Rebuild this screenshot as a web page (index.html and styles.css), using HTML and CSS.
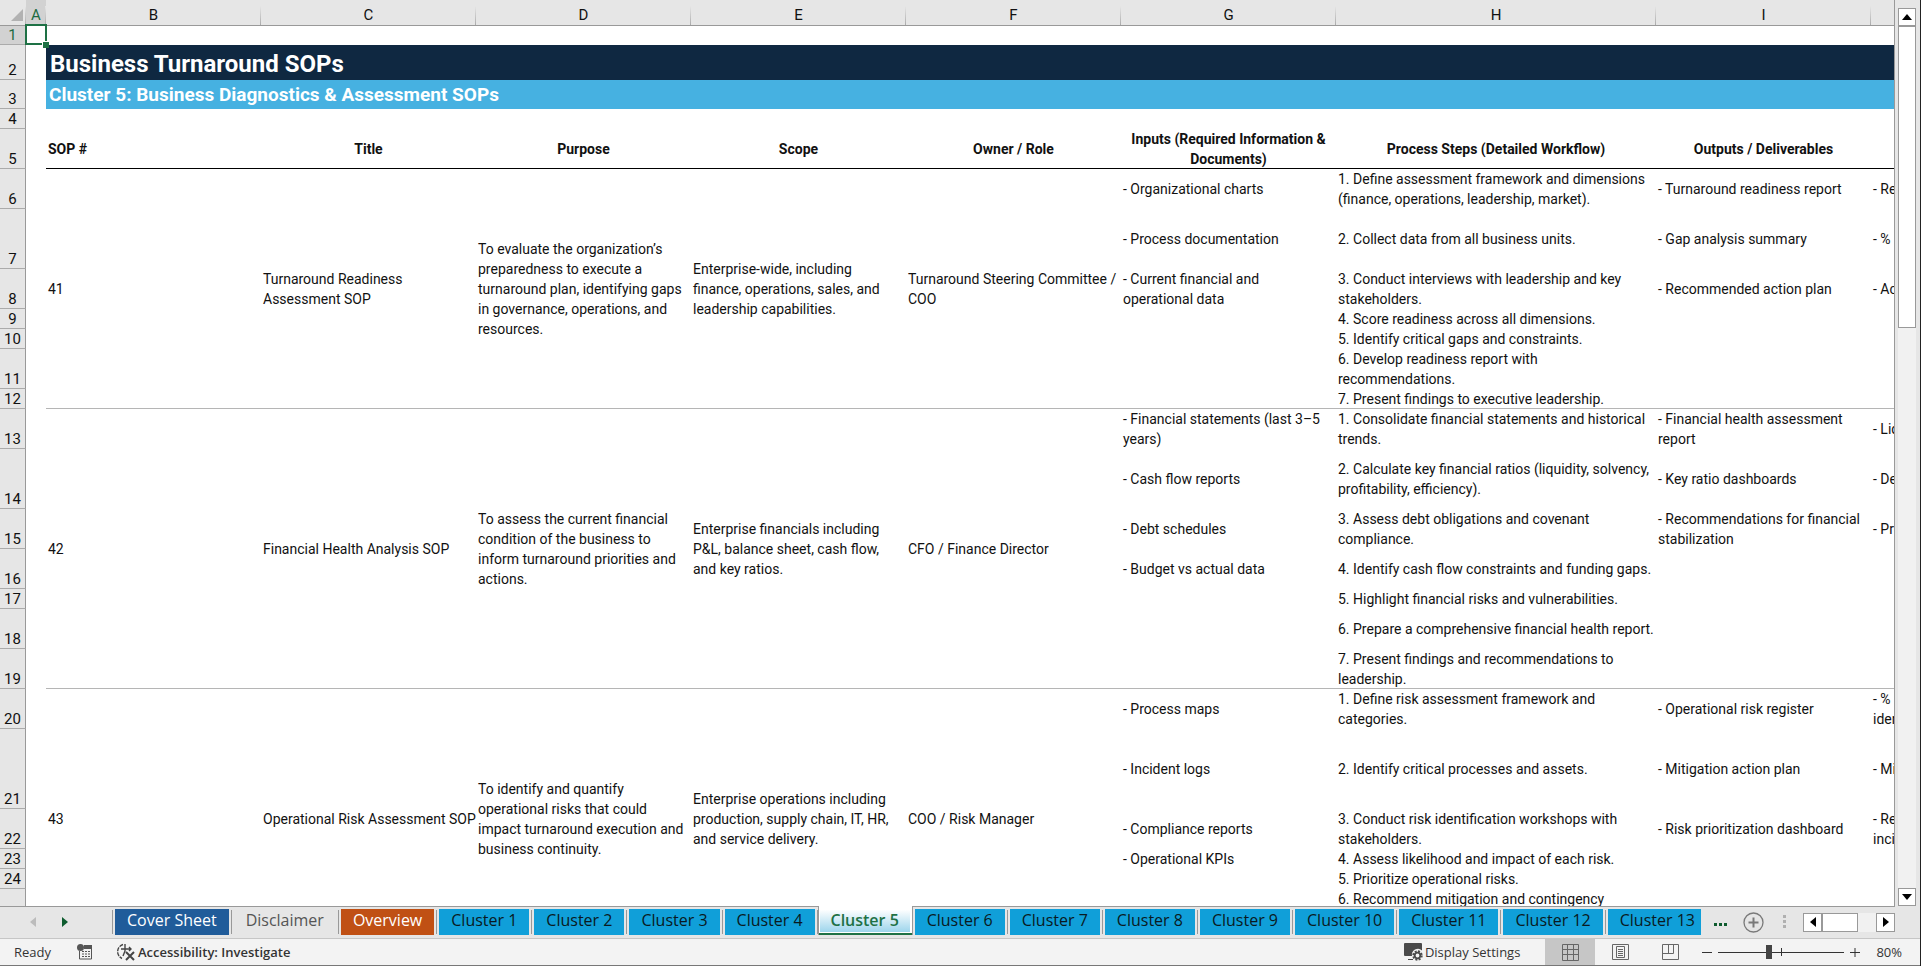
FILE: index.html
```html
<!DOCTYPE html>
<html lang="en">
<head>
    <meta charset="UTF-8">
    <title>Business Turnaround SOPs</title>
    <link rel="stylesheet" href="styles.css">
</head>
<body>
<div class="app">
    <div class="work">
        <div class="grid">
            <table class="sheet">
                <colgroup>
                    <col class="c-num"><col class="c-a"><col class="c-n"><col class="c-n"><col class="c-n"><col class="c-n"><col class="c-n"><col class="c-n"><col class="c-h"><col class="c-n"><col class="c-n">
                </colgroup>
                <thead>
                <tr class="letters">
                    <th class="corner"><svg width="12" height="12" viewBox="0 0 12 12"><path d="M12 0v12H0z" fill="#b2b2b2"/></svg></th>
                    <th class="on">A</th><th>B</th><th>C</th><th>D</th><th>E</th><th>F</th><th>G</th><th>H</th><th>I</th><th></th>
                </tr>
                </thead>
                <tbody>
                <tr class="h19"><th class="num on">1</th><td class="active"></td><td colspan="9"></td></tr>
                <tr class="h35"><th class="num">2</th><td></td><td class="title" colspan="9">Business Turnaround SOPs</td></tr>
                <tr class="h29"><th class="num">3</th><td></td><td class="subtitle" colspan="9">Cluster 5: Business Diagnostics &amp; Assessment SOPs</td></tr>
                <tr class="h20"><th class="num">4</th><td></td><td colspan="9"></td></tr>
                <tr class="h40 heads">
                    <th class="num">5</th><td></td>
                    <th class="left">SOP #</th><th>Title</th><th>Purpose</th><th>Scope</th><th>Owner / Role</th>
                    <th>Inputs (Required Information &amp; Documents)</th><th>Process Steps (Detailed Workflow)</th><th>Outputs / Deliverables</th><th></th>
                </tr>

                <!-- SOP 41 -->
                <tr class="h40">
                    <th class="num">6</th><td></td>
                    <td class="end" rowspan="7">41</td>
                    <td class="end" rowspan="7">Turnaround Readiness Assessment SOP</td>
                    <td class="end" rowspan="7">To evaluate the organization’s preparedness to execute a turnaround plan, identifying gaps in governance, operations, and resources.</td>
                    <td class="end" rowspan="7">Enterprise-wide, including<br>finance, operations, sales, and leadership capabilities.</td>
                    <td class="end" rowspan="7">Turnaround Steering Committee / COO</td>
                    <td>- Organizational charts</td><td>1. Define assessment framework and dimensions (finance, operations, leadership, market).</td><td>- Turnaround readiness report</td><td>- Readiness score</td>
                </tr>
                <tr class="h60"><th class="num">7</th><td></td><td>- Process documentation</td><td>2. Collect data from all business units.</td><td>- Gap analysis summary</td><td>- % of gaps closed</td></tr>
                <tr class="h40"><th class="num">8</th><td></td><td>- Current financial and<br>operational data</td><td>3. Conduct interviews with leadership and key stakeholders.</td><td>- Recommended action plan</td><td>- Action plan status</td></tr>
                <tr class="h20"><th class="num">9</th><td></td><td></td><td>4. Score readiness across all dimensions.</td><td></td><td></td></tr>
                <tr class="h20"><th class="num">10</th><td></td><td></td><td>5. Identify critical gaps and constraints.</td><td></td><td></td></tr>
                <tr class="h40"><th class="num">11</th><td></td><td></td><td>6. Develop readiness report with<br>recommendations.</td><td></td><td></td></tr>
                <tr class="h20 last"><th class="num">12</th><td></td><td></td><td>7. Present findings to executive leadership.</td><td></td><td></td></tr>

                <!-- SOP 42 -->
                <tr class="h40">
                    <th class="num">13</th><td></td>
                    <td class="end" rowspan="7">42</td>
                    <td class="end" rowspan="7">Financial Health Analysis SOP</td>
                    <td class="end" rowspan="7">To assess the current financial condition of the business to inform turnaround priorities and actions.</td>
                    <td class="end" rowspan="7">Enterprise financials including P&amp;L, balance sheet, cash flow, and key ratios.</td>
                    <td class="end" rowspan="7">CFO / Finance Director</td>
                    <td>- Financial statements (last 3–5 years)</td><td>1. Consolidate financial statements and historical trends.</td><td>- Financial health assessment report</td><td>- Liquidity ratio</td>
                </tr>
                <tr class="h60"><th class="num">14</th><td></td><td>- Cash flow reports</td><td>2. Calculate key financial ratios (liquidity, solvency, profitability, efficiency).</td><td>- Key ratio dashboards</td><td>- Debt ratio</td></tr>
                <tr class="h40"><th class="num">15</th><td></td><td>- Debt schedules</td><td>3. Assess debt obligations and covenant<br>compliance.</td><td>- Recommendations for financial stabilization</td><td>- Profit margin</td></tr>
                <tr class="h40"><th class="num">16</th><td></td><td>- Budget vs actual data</td><td>4. Identify cash flow constraints and funding gaps.</td><td></td><td></td></tr>
                <tr class="h20"><th class="num">17</th><td></td><td></td><td>5. Highlight financial risks and vulnerabilities.</td><td></td><td></td></tr>
                <tr class="h40"><th class="num">18</th><td></td><td></td><td>6. Prepare a comprehensive financial health report.</td><td></td><td></td></tr>
                <tr class="h40 last"><th class="num">19</th><td></td><td></td><td>7. Present findings and recommendations to leadership.</td><td></td><td></td></tr>

                <!-- SOP 43 -->
                <tr class="h40">
                    <th class="num">20</th><td></td>
                    <td rowspan="7">43</td>
                    <td class="wide" rowspan="7">Operational Risk Assessment SOP</td>
                    <td rowspan="7">To identify and quantify operational risks that could impact turnaround execution and business continuity.</td>
                    <td rowspan="7">Enterprise operations including production, supply chain, IT, HR, and service delivery.</td>
                    <td rowspan="7">COO / Risk Manager</td>
                    <td>- Process maps</td><td>1. Define risk assessment framework and<br>categories.</td><td>- Operational risk register</td><td>- % of risks<br>identified</td>
                </tr>
                <tr class="h80"><th class="num">21</th><td></td><td>- Incident logs</td><td>2. Identify critical processes and assets.</td><td>- Mitigation action plan</td><td>- Mitigation rate</td></tr>
                <tr class="h40"><th class="num">22</th><td></td><td>- Compliance reports</td><td>3. Conduct risk identification workshops with stakeholders.</td><td>- Risk prioritization dashboard</td><td>- Reduction in<br>incidents</td></tr>
                <tr class="h20"><th class="num">23</th><td></td><td>- Operational KPIs</td><td>4. Assess likelihood and impact of each risk.</td><td></td><td></td></tr>
                <tr class="h20"><th class="num">24</th><td></td><td></td><td>5. Prioritize operational risks.</td><td></td><td></td></tr>
                <tr class="h40"><th class="num">25</th><td></td><td></td><td>6. Recommend mitigation and contingency<br>plans.</td><td></td><td></td></tr>
                <tr class="h20 last"><th class="num">26</th><td></td><td></td><td></td><td></td><td></td></tr>
                </tbody>
            </table>
        </div>
        <div class="vscroll">
            <button class="arrow" aria-label="Scroll up"><svg width="10" height="6" viewBox="0 0 10 6"><path d="M5 0l5 6H0z"/></svg></button>
            <div class="track"><div class="thumb"></div></div>
            <button class="arrow" aria-label="Scroll down"><svg width="10" height="6" viewBox="0 0 10 6"><path d="M5 6l5-6H0z"/></svg></button>
        </div>
    </div>

    <div class="tabbar">
        <div class="tabnav">
            <button aria-label="Previous sheets"><svg width="6" height="10" viewBox="0 0 6 10"><path d="M6 0v10L0 5z" fill="#bcbcbc"/></svg></button>
            <button aria-label="Next sheets"><svg width="6" height="10" viewBox="0 0 6 10"><path d="M0 0v10l6-5z" fill="#0e5c2f"/></svg></button>
        </div>
        <nav class="tabs">
            <a class="tab" href="#"><span class="navy">Cover Sheet</span></a>
            <a class="tab" href="#"><span class="plain">Disclaimer</span></a>
            <a class="tab" href="#"><span class="orange">Overview</span></a>
            <a class="tab" href="#"><span>Cluster 1</span></a>
            <a class="tab" href="#"><span>Cluster 2</span></a>
            <a class="tab" href="#"><span>Cluster 3</span></a>
            <a class="tab" href="#"><span>Cluster 4</span></a>
            <a class="tab current" href="#"><span>Cluster 5</span></a>
            <a class="tab" href="#"><span>Cluster 6</span></a>
            <a class="tab" href="#"><span>Cluster 7</span></a>
            <a class="tab" href="#"><span>Cluster 8</span></a>
            <a class="tab" href="#"><span>Cluster 9</span></a>
            <a class="tab" href="#"><span>Cluster 10</span></a>
            <a class="tab" href="#"><span>Cluster 11</span></a>
            <a class="tab" href="#"><span>Cluster 12</span></a>
            <a class="tab" href="#"><span>Cluster 13</span></a>
        </nav>
        <div class="tabtools">
            <button class="more" aria-label="More sheets"><svg width="13" height="3" viewBox="0 0 13 3" fill="#0e5c2f"><path d="M0 0h3v3H0zM5 0h3v3H5zM10 0h3v3h-3z"/></svg></button>
            <button class="add" aria-label="New sheet"><svg width="21" height="21" viewBox="0 0 21 21" fill="none" stroke="#7a7a7a"><circle cx="10.500" cy="10.500" r="9.500" stroke-width="1.300"/><path d="M10.500 5.500v10M5.500 10.500h10" stroke-width="2"/></svg></button>
            <svg class="grip" width="4" height="14" viewBox="0 0 4 14" fill="#b0b0b0"><path d="M0 0h3v3H0zM0 5h3v3H0zM0 10h3v3H0z"/></svg>
            <div class="hscroll">
                <button class="arrow" aria-label="Scroll left"><svg width="6" height="10" viewBox="0 0 6 10"><path d="M6 0v10L0 5z"/></svg></button>
                <div class="track"><div class="thumb"></div></div>
                <button class="arrow" aria-label="Scroll right"><svg width="6" height="10" viewBox="0 0 6 10"><path d="M0 0v10l6-5z"/></svg></button>
            </div>
        </div>
    </div>

    <footer class="status">
        <span class="ready">Ready</span>
        <button class="macro" aria-label="Record macro"><svg width="15" height="16" viewBox="0 0 15 16"><path d="M14.500 2.500v12.500h-12V7" fill="none" stroke="#555"/><path d="M7 1h8v4H7z" fill="#555"/><circle cx="3.500" cy="3.500" r="3.500" fill="#555"/><path d="M5 7.500h8M5 10h8M5 12.500h8" stroke="#555" stroke-dasharray="2 1"/></svg></button>
        <button class="access"><svg width="19" height="18" viewBox="0 0 19 18" fill="none" stroke="#444"><path d="M7 1.500A7.500 7.500 0 0 0 6 15.500" stroke-width="1.400" stroke-dasharray="4 1"/><path d="M5 6h10M13 4l2 2-2 2M9 1v7l-2 5" stroke-width="1.400"/><path d="M10 9l8 8M18 9l-8 8" stroke-width="2"/></svg>Accessibility: Investigate</button>
        <button class="display"><svg width="19" height="18" viewBox="0 0 19 18"><path d="M1 0h16a1 1 0 0 1 1 1v6.500a6 6 0 0 0-10 5.500H1a1 1 0 0 1-1-1V1a1 1 0 0 1 1-1zM4 16h5v1H4z" fill="#4a4a4a"/><circle cx="13.500" cy="12.500" r="2.800" fill="none" stroke="#4a4a4a" stroke-width="1.800"/><circle cx="13.500" cy="12.500" r="4.300" fill="none" stroke="#4a4a4a" stroke-width="1.800" stroke-dasharray="2 1.377"/></svg>Display Settings</button>
        <div class="views">
            <button class="view on" aria-label="Normal"><svg width="17" height="17" viewBox="0 0 17 17" fill="none" stroke="#666"><path d="M.5.500h16v16H.5zM.5 5.500h16M.5 10.500h16M5.500.500v16M11.500.500v16"/></svg></button>
            <button class="view" aria-label="Page Layout"><svg width="17" height="16" viewBox="0 0 17 16" fill="none" stroke="#666"><path d="M.5.500h16v15H.5zM4.500 2.500h8v11h-8zM6 5.500h5M6 7.500h5M6 9.500h5M6 11.500h5"/></svg></button>
            <button class="view" aria-label="Page Break Preview"><svg width="17" height="16" viewBox="0 0 17 16" fill="none" stroke="#666"><path d="M.5.500h16v15H.5zM.5 9.500h11V.5M6.500.500v9"/></svg></button>
        </div>
        <div class="zoom">
            <button aria-label="Zoom out"><svg width="10" height="10" viewBox="0 0 10 10"><path d="M0 5.500h10" stroke="#333"/></svg></button>
            <input type="range" min="10" max="190" value="81" aria-label="Zoom">
            <button aria-label="Zoom in"><svg width="10" height="10" viewBox="0 0 10 10"><path d="M0 5.500h10M5 1v9" stroke="#333"/></svg></button>
            <span class="pct">80%</span>
        </div>
    </footer>
</div>
</body>
</html>
```
FILE: styles.css
```css
* {
    box-sizing: border-box;
}

body {
    margin: 0;
    font-family: Roboto, "Liberation Sans", sans-serif;
    font-size: 14px;
    line-height: 20px;
    color: #111;
    background: #e6e6e6;
}

button {
    display: flex;
    align-items: center;
    justify-content: center;
    margin: 0;
    padding: 0;
    border: 0;
    background: none;
    font: inherit;
    color: inherit;
}

.app {
    display: flex;
    flex-direction: column;
    height: 100vh;
    border-right: 1px solid #222;
}

/* worksheet */
.work {
    display: flex;
    flex: 1;
    min-height: 0;
}

.grid {
    flex: 1;
    min-width: 0;
    overflow: hidden;
    background: linear-gradient(#e6e6e6 26px, #fff 26px);
    border-right: 1px solid #999;
}

.sheet {
    width: 2086px;
    table-layout: fixed;
    border-collapse: separate;
    border-spacing: 0;
}

.c-num {
    width: 26px;
}

.c-a {
    width: 20px;
}

.c-n {
    width: 215px;
}

.c-h {
    width: 320px;
}

.sheet td,
.sheet th {
    padding: 0 2px;
    text-align: left;
    vertical-align: middle;
}

.letters th {
    height: 26px;
    padding: 6px 0 0;
    border-bottom: 1px solid #999;
    background: linear-gradient(#e6e6e6, #ababab) right bottom / 1px 19px no-repeat #e6e6e6;
    font-size: 15px;
    line-height: 19px;
    font-weight: normal;
    text-align: center;
}

.letters .on {
    background-color: #d2d2d2;
    color: #1e6b41;
}

.letters .corner {
    padding: 4px 3px 0 0;
    text-align: right;
    line-height: 0;
}

.sheet .num {
    padding: 0;
    border-right: 1px solid #999;
    border-bottom: 1px solid #ababab;
    background: #e6e6e6;
    font-size: 15px;
    line-height: 18px;
    font-weight: normal;
    text-align: center;
    vertical-align: bottom;
}

.sheet .num.on {
    background: #d2d2d2;
    color: #1e6b41;
}

.sheet .active {
    position: relative;
}

.active::before {
    content: "";
    position: absolute;
    inset: -2px -1px 0 -1px;
    border: 2px solid #1e7145;
}

.active::after {
    content: "";
    position: absolute;
    right: -3px;
    bottom: -3px;
    width: 6px;
    height: 6px;
    background: #1e7145;
    border: 1px solid #fff;
    border-width: 1px 0 0 1px;
}

.h19 {
    height: 19px;
}

.h20 {
    height: 20px;
}

.h29 {
    height: 29px;
}

.h35 {
    height: 35px;
}

.h40 {
    height: 40px;
}

.h60 {
    height: 60px;
}

.h80 {
    height: 80px;
}

.sheet .title {
    padding: 4px 4px 0;
    background: #0f2841;
    color: #fff;
    font-size: 24px;
    line-height: 31px;
    font-weight: bold;
}

.sheet .subtitle {
    padding: 0 3px;
    background: #46b1e1;
    color: #fff;
    font-size: 19px;
    line-height: 29px;
    font-weight: bold;
}

/* rules are shadows so they don't add to the row height */
.heads th:not(.num) {
    box-shadow: inset 0 -1px #000;
    text-align: center;
}

.heads .left:not(.num) {
    text-align: left;
}

.sheet td.end,
.last td:nth-child(n+3) {
    box-shadow: inset 0 -1px #b5b5b5;
}

.wide {
    white-space: nowrap;
}

/* scroll bars */
.vscroll {
    display: flex;
    flex-direction: column;
    width: 25px;
    padding: 8px 4px 0 3px;
}

.arrow {
    flex: none;
    width: 18px;
    height: 18px;
    background: #fff;
    border: 1px solid #999;
    color: #111;
}

.track {
    flex: 1;
    background: #f1f1f1;
}

.thumb {
    background: #fff;
    border: 1px solid #999;
}

.vscroll .thumb {
    height: 35%;
}

/* sheet tabs */
.tabbar {
    display: flex;
    height: 33px;
    border-bottom: 1px solid #c6c6c6;
    font-family: "Open Sans", "Noto Sans", sans-serif;
    font-size: 16px;
    background: linear-gradient(#999, #999) top left / calc(100% - 25px) 1px no-repeat;
}

.tabnav {
    display: flex;
    gap: 26px;
    width: 112px;
    padding: 3px 0 0 30px;
}

.tabnav button {
    width: 6px;
    height: 26px;
}

.tabs {
    display: flex;
    background: linear-gradient(#999, #999) left 4px / 1px 24px no-repeat;
}

.tab {
    display: flex;
    padding: 3px 3px 3px 2px;
    color: #0a1a22;
    text-decoration: none;
    background: linear-gradient(#999, #999) right 4px / 1px 24px no-repeat;
}

.tab:first-child {
    padding-left: 3px;
}

.tab:last-child {
    background: none;
}

.tab span {
    height: 26px;
    min-width: 90px;
    padding: 0 12px;
    background: #109fd9;
    line-height: 23px;
    text-align: center;
    white-space: nowrap;
}

.tab:last-child span {
    padding-right: 6px;
}

.tab .navy {
    background: #205c9a;
    color: #fff;
}

.tab .plain {
    background: none;
    color: #555;
}

.tab .orange {
    background: #c05014;
    color: #fff;
}

.tab.current {
    height: 29px;
    padding: 1px 2px 3px 1px;
    background: #fff;
    border: 1px solid #999;
    border-width: 0 1px;
    box-shadow: inset 0 -2px #1e7145;
    font-weight: 600;
    color: #1e7145;
}

.current span {
    height: 25px;
    padding: 0 6px;
    background: linear-gradient(#fff 10%, #9dd5ec);
    line-height: 27px;
}

.tabtools {
    display: flex;
    align-items: center;
    margin-left: auto;
    padding-right: 25px;
}

.more {
    width: 13px;
    margin-right: 16px;
    padding-top: 4px;
}

.add {
    margin-right: 19px;
}

.grip {
    margin-right: 16px;
}

.hscroll {
    display: flex;
    width: 92px;
    height: 19px;
}

.hscroll .arrow {
    width: 19px;
    height: 19px;
}

.hscroll .thumb {
    width: 36px;
    height: 19px;
}

/* status bar */
.status {
    display: flex;
    align-items: stretch;
    height: 27px;
    background: #f3f3f3;
    border-bottom: 1px solid #777;
    font-family: "Open Sans", "Noto Sans", sans-serif;
    font-size: 13px;
    line-height: 26px;
    color: #333;
}

.ready {
    width: 63px;
    margin-left: 14px;
}

.access {
    gap: 3px;
    margin-left: 24px;
    font-weight: 600;
}

.display {
    gap: 2px;
    margin-left: auto;
}

.views {
    display: flex;
    margin-left: 25px;
}

.view {
    width: 50px;
}

.view.on {
    background: #c6c6c6;
}

.zoom {
    display: flex;
    align-items: center;
    gap: 6px;
    margin-left: 7px;
    padding-right: 18px;
}

.zoom input {
    width: 126px;
    height: 20px;
    margin: 0;
    appearance: none;
    background: linear-gradient(#333, #333) center / 100% 1px no-repeat, linear-gradient(#333, #333) center / 1px 8px no-repeat;
}

.zoom input::-webkit-slider-thumb {
    appearance: none;
    width: 6px;
    height: 14px;
    background: #444;
}

.pct {
    margin-left: 10px;
}
```
